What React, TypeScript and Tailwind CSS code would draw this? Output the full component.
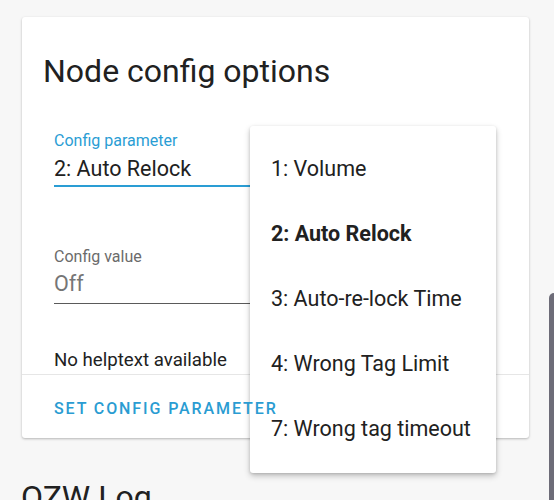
import React from "react";

const opcoes = [
  { id: 1, label: "1: Volume" },
  { id: 2, label: "2: Auto Relock" },
  { id: 3, label: "3: Auto-re-lock Time" },
  { id: 4, label: "4: Wrong Tag Limit" },
  { id: 7, label: "7: Wrong tag timeout" },
];

export default function App() {
  const selecionado = 2;

  return (
    <div
      className="relative h-[500px] w-[554px] overflow-hidden bg-[#f7f7f7] text-[#212121]"
      style={{ fontFamily: "Roboto, 'Liberation Sans', sans-serif" }}
    >
      {/* CARD */}
      <div className="relative ml-[22px] mt-[17px] h-[421px] w-[507px] rounded-[3px] bg-white shadow-[0_1px_3px_rgba(0,0,0,0.18),0_1px_2px_rgba(0,0,0,0.1)]">
        <div className="pl-[21px] pr-[21px] pt-[34px]">
          <h2 className="h-[40px] text-[32px] leading-[40px] font-normal text-[#212121]">Node config options</h2>

          <div className="mt-[40px] pl-[11px]">
            <div className="h-[20px] text-[16px] leading-[20px] text-[#2a9dd4]">Config parameter</div>
            <div className="mt-[3.5px] h-[28px] text-[21.5px] leading-[28px] text-[#212121]">2: Auto Relock</div>
            <div className="mt-[2px] h-[2px] w-[200px] bg-[#2a9dd4]" />
          </div>

          <div className="mt-[60px] pl-[11px]">
            <div className="h-[20px] text-[16px] leading-[20px] text-[#6b6b6b]">Config value</div>
            <div className="mt-[3.5px] h-[28px] text-[21.5px] leading-[28px] text-[#767676]">Off</div>
            <div className="mt-[5px] h-px w-[200px] bg-[#5a5a5a]" />
          </div>

          <p className="mt-[44px] h-[24px] pl-[11px] text-[18.67px] leading-[24px] text-[#212121]">No helptext available</p>
        </div>

        <div className="mt-[2px] h-px w-full bg-[#e6e6e6]" />

        <div className="relative z-20 pl-[32px] pt-[22px]">
          <button
            type="button"
            className="h-[20px] text-[16px] leading-[20px] font-medium uppercase tracking-[1.9px] text-[#2a9cd2]"
          >
            Set config parameter
          </button>
        </div>
      </div>

      {/* OZW LOG */}
      <h2 className="ml-[21px] mt-[39px] h-[40px] text-[32px] leading-[40px] font-normal text-[#212121]">OZW Log</h2>

      {/* MENU */}
      <ul className="absolute left-[250px] top-[126px] z-10 w-[246px] rounded-[3px] bg-white py-[11px] shadow-[0_3px_6px_rgba(0,0,0,0.22),0_1px_3px_rgba(0,0,0,0.14)]">
        {opcoes.map((op) => (
          <li
            key={op.id}
            className={`flex h-[65px] items-center pl-[21px] text-[21.5px] text-[#212121] ${
              op.id === selecionado ? "font-bold" : "font-normal"
            }`}
          >
            {op.label}
          </li>
        ))}
      </ul>

      {/* barra do lado */}
      <div className="absolute bottom-0 right-0 top-[293px] w-[5px] rounded-tl-[6px] bg-[#6d6c78]" />
    </div>
  );
}
